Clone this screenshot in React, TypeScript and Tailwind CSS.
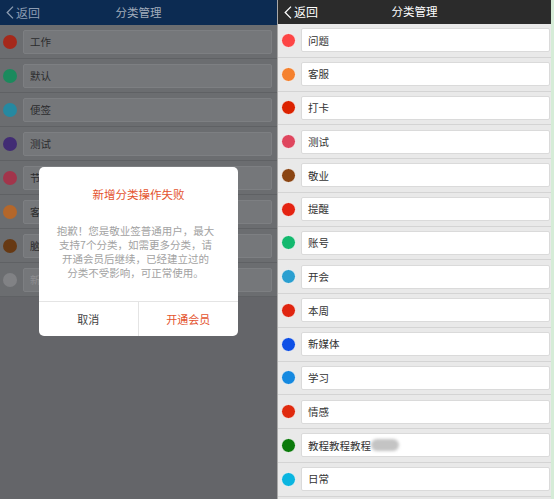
const cjk = "font-['Noto_Sans_CJK_SC','Noto_Sans',sans-serif]";

const leftRows = [
  { dot: "bg-[#a5291b]", text: "工作" },
  { dot: "bg-[#1b8a5d]", text: "默认" },
  { dot: "bg-[#2689a1]", text: "便签" },
  { dot: "bg-[#412c74]", text: "测试" },
  { dot: "bg-[#a2354b]", text: "节日" },
  { dot: "bg-[#b4672b]", text: "客户" },
  { dot: "bg-[#673913]", text: "脑图" },
  { dot: "bg-[#818285]", text: "新增分类", placeholder: true },
];

const rightRows = [
  { dot: "bg-[#fd4545]", text: "问题" },
  { dot: "bg-[#f5812e]", text: "客服" },
  { dot: "bg-[#dc2200]", text: "打卡" },
  { dot: "bg-[#df465e]", text: "测试" },
  { dot: "bg-[#8b4513]", text: "敬业" },
  { dot: "bg-[#e42312]", text: "提醒" },
  { dot: "bg-[#13b96e]", text: "账号" },
  { dot: "bg-[#2a9fd0]", text: "开会" },
  { dot: "bg-[#e02510]", text: "本周" },
  { dot: "bg-[#0d4fe6]", text: "新媒体" },
  { dot: "bg-[#1589e0]", text: "学习" },
  { dot: "bg-[#e02a0e]", text: "情感" },
  { dot: "bg-[#0a7a0a]", text: "教程教程教程", blurred: true },
  { dot: "bg-[#0ab5e0]", text: "日常" },
];

function Chevron({ color }: { color: string }) {
  return (
    <svg width="8" height="13" viewBox="0 0 8 13" fill="none">
      <polyline points="7,0.6 1.2,6.5 7,12.4" stroke={color} strokeWidth="1.3" />
    </svg>
  );
}

function Header({ dark }: { dark: boolean }) {
  return (
    <div
      className={`grid grid-cols-[1fr_auto_1fr] items-center shrink-0 ${
        dark ? "h-[25px] bg-[#0c2b52]" : "h-[24px] bg-[#2b2b2b]"
      }`}
    >
      <div className="flex items-center gap-[2px] pl-[6px]">
        <Chevron color={dark ? "#8e9db2" : "#ffffff"} />
        <span className={`text-[12px] leading-none ${dark ? "text-[#8e9db2]" : "text-white"}`}>返回</span>
      </div>
      <span className={`text-[11.5px] leading-none ${dark ? "text-[#a3adbb]" : "text-white"}`}>分类管理</span>
      <div />
    </div>
  );
}

function FailDialog() {
  return (
    <div className="w-[199px] h-[169px] rounded-[5px] bg-white flex flex-col">
      <p className="pt-[19px] text-center text-[11.5px] leading-[16px] text-[#e4532e]">新增分类操作失败</p>
      <p className="mt-[22px] pr-[6px] text-center text-[10.5px] leading-[14px] text-[#a2a2a2]">
        <span className="block">抱歉！您是敬业签普通用户，最大</span>
        <span className="block">支持7个分类，如需更多分类，请</span>
        <span className="block">开通会员后继续，已经建立过的</span>
        <span className="block">分类不受影响，可正常使用。</span>
      </p>
      <div className="mt-auto h-[35px] grid grid-cols-2 border-t border-[#e4e4e4]">
        <button className="border-r border-[#e4e4e4] text-[11px] text-[#444444]">取消</button>
        <button className="text-[11px] text-[#e4532e]">开通会员</button>
      </div>
    </div>
  );
}

function LeftPanel() {
  return (
    <div className="relative w-[277px] h-full bg-[#646569] flex flex-col">
      <Header dark />
      {leftRows.map((r) => (
        <div
          key={r.text}
          className="h-[34px] flex items-center pl-[3px] pr-[5px] bg-[#6b6d70] border-b border-[#5f6164]"
        >
          <span className={`w-[14px] h-[14px] rounded-full shrink-0 ${r.dot}`} />
          <div className="ml-[6px] flex-1 h-[24px] flex items-center pl-[6px] bg-[#75777a] border border-[#7d7f82] rounded-[2px]">
            <span className={`text-[10.5px] ${r.placeholder ? "text-[#8d8e91]" : "text-[#2c2c2e]"}`}>{r.text}</span>
          </div>
        </div>
      ))}
      <div className="absolute inset-0 flex items-center justify-center pt-[4px]">
        <FailDialog />
      </div>
    </div>
  );
}

function RightPanel() {
  return (
    <div className="w-[277px] h-full flex flex-col bg-[#e6e6e6] border-l border-[#a9a9a9] border-r-[3px] border-r-[#d5ecd7]">
      <Header dark={false} />
      {rightRows.map((r) => (
        <div
          key={r.text}
          className="h-[33.75px] shrink-0 flex items-center pl-[3px] pr-[1px] bg-[#e9e9e9] border-b border-[#d4d4d4]"
        >
          <span className={`w-[15px] h-[15px] rounded-full shrink-0 border border-[#f3f3f3] ${r.dot}`} />
          <div className="ml-[5px] flex-1 h-[24px] flex items-center pl-[6px] bg-white border border-[#dadada] rounded-[2px]">
            <span className="text-[10.5px] text-[#333333]">{r.text}</span>
            {r.blurred && (
              <span className="inline-block w-[28px] h-[12px] rounded-full bg-[#c4c4c4] blur-[1.5px]" />
            )}
          </div>
        </div>
      ))}
    </div>
  );
}

export default function App() {
  return (
    <div className={`w-[554px] h-[499px] flex overflow-hidden bg-white ${cjk}`}>
      <LeftPanel />
      <RightPanel />
    </div>
  );
}
